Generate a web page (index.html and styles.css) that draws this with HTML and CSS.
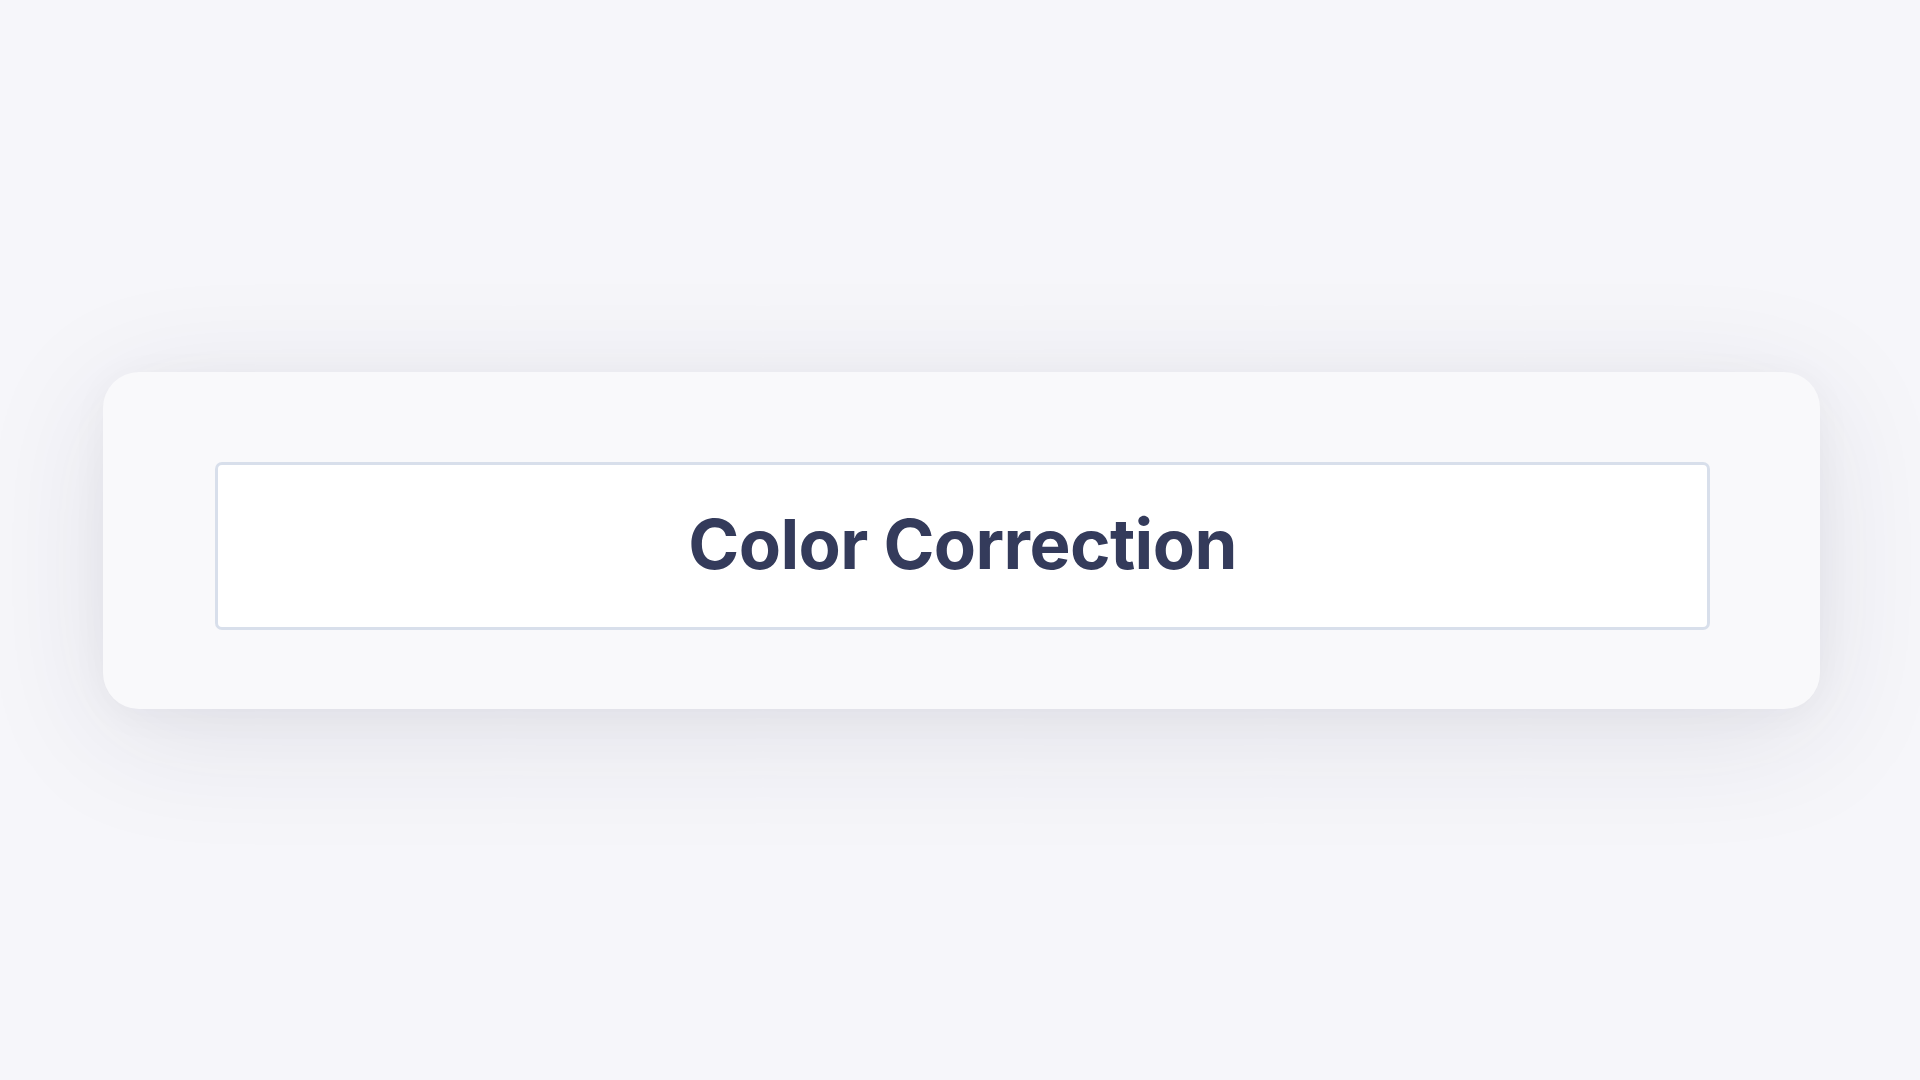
FILE: index.html
```html
<!DOCTYPE html>
<html lang="en">
<head>
<meta charset="utf-8">
<title>Color Correction</title>
<link rel="stylesheet" href="styles.css">
</head>
<body>
<main class="stage">
  <section class="card">
    <div class="title-box">
      <h1 class="title">Color Correction</h1>
    </div>
  </section>
</main>
</body>
</html>
```

FILE: styles.css
```css
* { box-sizing: border-box; }
html, body {
  margin: 0;
  padding: 0;
  background: #f6f6fa;
  font-family: Inter, "Noto Sans", "Liberation Sans", sans-serif;
}
.stage {
  width: 1920px;
  height: 1080px;
  display: flex;
  align-items: center;
  justify-content: center;
  padding-left: 3px;
}
.card {
  width: 1717px;
  height: 337px;
  background: #f9f9fb;
  border-radius: 36px;
  padding: 90px 110px 79px 112px;
  box-shadow: 0 24px 130px rgba(40, 40, 70, 0.10), 0 6px 40px rgba(40, 40, 70, 0.035);
  display: flex;
}
.title-box {
  flex: 1;
  height: 168px;
  background: #ffffff;
  border: 3px solid #d8dfeb;
  border-radius: 7px;
  display: flex;
  align-items: center;
  justify-content: center;
}
.title {
  margin: 0;
  font-size: 69px;
  font-weight: 700;
  color: #343b5b;
  letter-spacing: -0.6px;
  line-height: 1;
  padding-bottom: 3px;
}
```
